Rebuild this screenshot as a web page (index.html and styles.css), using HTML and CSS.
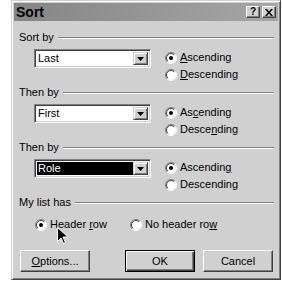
FILE: index.html
```html
<!DOCTYPE html>
<html>
<head>
<meta charset="utf-8">
<link rel="stylesheet" href="styles.css">
</head>
<body>
<div class="dialog">
  <div class="titlebar">
    <span class="title">Sort</span>
    <span class="tbtn">?</span>
    <span class="tbtn tbtn-x">
      <svg width="8" height="7" viewBox="0 0 8 7"><path d="M0 0h2l2 2.5 2-2.5h2l-3 3.5 3 3.5h-2l-2-2.5-2 2.5h-2l3-3.5z" fill="#000"/></svg>
    </span>
  </div>
  <div class="content">
    <div class="section">
      <div class="legend"><span>Sort by</span><span class="rule"></span></div>
      <div class="row">
        <div class="combo"><span class="ctext">Last</span><span class="dd"><svg width="7" height="4" viewBox="0 0 7 4"><path d="M0 0h7l-3.5 4z" fill="#000"/></svg></span></div>
        <div class="radios">
          <div class="radio"><svg class="rb" width="12" height="12" viewBox="0 0 12 12"><circle cx="6" cy="6" r="5" fill="#fff"/><path d="M2.1 9.9A5.5 5.5 0 0 1 9.9 2.1" fill="none" stroke="#808080"/><path d="M2.8 9.2A4.5 4.5 0 0 1 9.2 2.8" fill="none" stroke="#404040"/><path d="M9.9 2.1A5.5 5.5 0 0 1 2.1 9.9" fill="none" stroke="#fff"/><circle cx="6" cy="6" r="2" fill="#000"/></svg><span><u>A</u>scending</span></div>
          <div class="radio"><svg class="rb" width="12" height="12" viewBox="0 0 12 12"><circle cx="6" cy="6" r="5" fill="#fff"/><path d="M2.1 9.9A5.5 5.5 0 0 1 9.9 2.1" fill="none" stroke="#808080"/><path d="M2.8 9.2A4.5 4.5 0 0 1 9.2 2.8" fill="none" stroke="#404040"/><path d="M9.9 2.1A5.5 5.5 0 0 1 2.1 9.9" fill="none" stroke="#fff"/></svg><span><u>D</u>escending</span></div>
        </div>
      </div>
    </div>
    <div class="section">
      <div class="legend"><span>Then by</span><span class="rule"></span></div>
      <div class="row">
        <div class="combo"><span class="ctext">First</span><span class="dd"><svg width="7" height="4" viewBox="0 0 7 4"><path d="M0 0h7l-3.5 4z" fill="#000"/></svg></span></div>
        <div class="radios">
          <div class="radio"><svg class="rb" width="12" height="12" viewBox="0 0 12 12"><circle cx="6" cy="6" r="5" fill="#fff"/><path d="M2.1 9.9A5.5 5.5 0 0 1 9.9 2.1" fill="none" stroke="#808080"/><path d="M2.8 9.2A4.5 4.5 0 0 1 9.2 2.8" fill="none" stroke="#404040"/><path d="M9.9 2.1A5.5 5.5 0 0 1 2.1 9.9" fill="none" stroke="#fff"/><circle cx="6" cy="6" r="2" fill="#000"/></svg><span>As<u>c</u>ending</span></div>
          <div class="radio"><svg class="rb" width="12" height="12" viewBox="0 0 12 12"><circle cx="6" cy="6" r="5" fill="#fff"/><path d="M2.1 9.9A5.5 5.5 0 0 1 9.9 2.1" fill="none" stroke="#808080"/><path d="M2.8 9.2A4.5 4.5 0 0 1 9.2 2.8" fill="none" stroke="#404040"/><path d="M9.9 2.1A5.5 5.5 0 0 1 2.1 9.9" fill="none" stroke="#fff"/></svg><span>Desce<u>n</u>ding</span></div>
        </div>
      </div>
    </div>
    <div class="section">
      <div class="legend"><span>Then by</span><span class="rule"></span></div>
      <div class="row">
        <div class="combo"><span class="ctext sel">Role</span><span class="dd"><svg width="7" height="4" viewBox="0 0 7 4"><path d="M0 0h7l-3.5 4z" fill="#000"/></svg></span></div>
        <div class="radios">
          <div class="radio"><svg class="rb" width="12" height="12" viewBox="0 0 12 12"><circle cx="6" cy="6" r="5" fill="#fff"/><path d="M2.1 9.9A5.5 5.5 0 0 1 9.9 2.1" fill="none" stroke="#808080"/><path d="M2.8 9.2A4.5 4.5 0 0 1 9.2 2.8" fill="none" stroke="#404040"/><path d="M9.9 2.1A5.5 5.5 0 0 1 2.1 9.9" fill="none" stroke="#fff"/><circle cx="6" cy="6" r="2" fill="#000"/></svg><span>Ascendin<u>g</u></span></div>
          <div class="radio"><svg class="rb" width="12" height="12" viewBox="0 0 12 12"><circle cx="6" cy="6" r="5" fill="#fff"/><path d="M2.1 9.9A5.5 5.5 0 0 1 9.9 2.1" fill="none" stroke="#808080"/><path d="M2.8 9.2A4.5 4.5 0 0 1 9.2 2.8" fill="none" stroke="#404040"/><path d="M9.9 2.1A5.5 5.5 0 0 1 2.1 9.9" fill="none" stroke="#fff"/></svg><span>Descendin<u>g</u></span></div>
        </div>
      </div>
    </div>
    <div class="legend"><span>My list has</span><span class="rule"></span></div>
    <div class="hrow">
      <div class="radio hitem"><svg class="rb" width="12" height="12" viewBox="0 0 12 12"><circle cx="6" cy="6" r="5" fill="#fff"/><path d="M2.1 9.9A5.5 5.5 0 0 1 9.9 2.1" fill="none" stroke="#808080"/><path d="M2.8 9.2A4.5 4.5 0 0 1 9.2 2.8" fill="none" stroke="#404040"/><path d="M9.9 2.1A5.5 5.5 0 0 1 2.1 9.9" fill="none" stroke="#fff"/><circle cx="6" cy="6" r="2" fill="#000"/></svg><span>Header <u>r</u>ow</span></div>
      <div class="radio"><svg class="rb" width="12" height="12" viewBox="0 0 12 12"><circle cx="6" cy="6" r="5" fill="#fff"/><path d="M2.1 9.9A5.5 5.5 0 0 1 9.9 2.1" fill="none" stroke="#808080"/><path d="M2.8 9.2A4.5 4.5 0 0 1 9.2 2.8" fill="none" stroke="#404040"/><path d="M9.9 2.1A5.5 5.5 0 0 1 2.1 9.9" fill="none" stroke="#fff"/></svg><span>No header ro<u>w</u></span></div>
    </div>
    <div class="buttons">
      <div class="btn"><u>O</u>ptions...</div>
      <div class="btn btn-default">OK</div>
      <div class="btn btn-cancel">Cancel</div>
    </div>
  </div>
</div>
<svg class="cursor" width="12" height="18" viewBox="0 0 12 18"><path d="M0.5 0.5v14l3.5-3.5 2.5 5.5 2-1-2.5-5.5h5z" fill="#000" stroke="#fff" stroke-width="1"/></svg>
</body>
</html>
```

FILE: styles.css
```css
html, body {
  margin: 0;
  padding: 0;
  background: #fff;
}

.dialog {
  margin-left: 11px;
  width: 270px;
  height: 280px;
  box-sizing: border-box;
  background: #d0d0d0;
  border: 1px solid;
  border-color: #d0d0d0 #404040 #404040 #d0d0d0;
  box-shadow: inset 1px 1px #fff, inset -1px -1px #808080;
  padding: 2px;
  font-family: "Liberation Sans", Arial, sans-serif;
  font-size: 11px;
  color: #000;
}

.titlebar {
  height: 18px;
  display: flex;
  align-items: center;
  padding: 0 2px 0 2px;
  background: linear-gradient(90deg, #858585, #a6a6a6);
}

.title {
  flex: 1;
  font-weight: bold;
  font-size: 14px;
  line-height: 18px;
}

.tbtn {
  width: 14px;
  height: 12px;
  box-sizing: border-box;
  margin-left: 2px;
  background: #d0d0d0;
  border: 1px solid;
  border-color: #fff #404040 #404040 #fff;
  box-shadow: inset -1px -1px #808080;
  display: flex;
  align-items: center;
  justify-content: center;
  font-weight: bold;
  font-size: 10px;
  line-height: 10px;
}

.content {
  padding: 10px 4px 0 5px;
}

.section {
  height: 55px;
}

.legend {
  height: 12px;
  display: flex;
  align-items: center;
  gap: 4px;
  line-height: 12px;
}

.rule {
  flex: 1;
  height: 0;
  border-top: 1px solid #808080;
  border-bottom: 1px solid #fff;
  margin-top: 2px;
}

.row {
  display: flex;
  margin-top: 6px;
  padding-left: 15px;
}

.combo {
  width: 117px;
  height: 19px;
  box-sizing: border-box;
  background: #fff;
  border: 1px solid;
  border-color: #808080 #fff #fff #808080;
  box-shadow: inset 1px 1px #404040, inset -1px -1px #d0d0d0;
  padding: 2px;
  display: flex;
}

.ctext {
  flex: 1;
  line-height: 13px;
  padding-left: 1px;
}

.ctext.sel {
  background: #000;
  color: #fff;
}

.dd {
  width: 15px;
  height: 13px;
  box-sizing: border-box;
  background: #d0d0d0;
  border: 1px solid;
  border-color: #d0d0d0 #404040 #404040 #d0d0d0;
  box-shadow: inset 1px 1px #fff, inset -1px -1px #808080;
  display: flex;
  align-items: center;
  justify-content: center;
}

.radios {
  margin-left: 14px;
  margin-top: 2px;
}

.radio {
  height: 17px;
  display: flex;
  align-items: flex-start;
  gap: 3px;
  line-height: 13px;
}

.rb {
  flex: none;
  margin-top: 1px;
}

.hrow {
  display: flex;
  margin-top: 10px;
  padding-left: 16px;
}

.hitem {
  width: 95px;
}

.buttons {
  display: flex;
  margin-top: 15px;
  padding: 0 1px;
}

.btn {
  width: 70px;
  height: 22px;
  box-sizing: border-box;
  border: 1px solid;
  border-color: #fff #404040 #404040 #fff;
  box-shadow: inset -1px -1px #808080;
  display: flex;
  align-items: center;
  justify-content: center;
}

.btn-default {
  margin-left: auto;
  border: 1px solid #000;
  box-shadow: inset 1px 1px #fff, inset -1px -1px #404040, inset -2px -2px #808080;
}

.btn-cancel {
  margin-left: 8px;
}

.cursor {
  position: absolute;
  left: 57px;
  top: 227px;
}
```
